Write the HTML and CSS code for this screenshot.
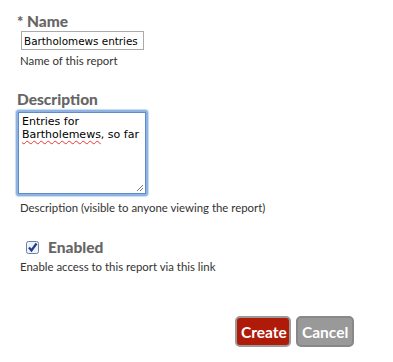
FILE: index.html
```html
<!DOCTYPE html>
<html>
<head>
<title>New report</title>
<link rel="stylesheet" href="styles.css">
</head>
<body>

<form id="report-form">
  <div class="field field-name">
    <label class="label" for="name"><span class="req">*</span> Name</label>
    <input type="text" id="name" class="text-input" value="Bartholomews entries">
    <div class="hint">Name of this report</div>
  </div>

  <div class="field field-desc">
    <label class="label" for="desc">Description</label>
    <div class="area-wrap">
      <div class="area">Entries for<br><span class="misspelt">Bartholemews</span>, so far
        <svg class="grip" width="8" height="8" viewBox="0 0 8 8"><path d="M1 7L7 1M4 7L7 4" stroke="#777" stroke-width="1"/></svg>
      </div>
    </div>
    <div class="hint">Description (visible to anyone viewing the report)</div>
  </div>

  <div class="field field-enabled">
    <label class="label check-label">
      <span class="checkbox">
        <svg width="13" height="13" viewBox="0 0 13 13"><rect x="0.5" y="0.5" width="12" height="12" rx="2" fill="#eef2fa" stroke="#6a7fa8"/><path d="M3 6.5L5.5 9.5L10.5 2.5" fill="none" stroke="#1d3f8a" stroke-width="2.2"/></svg>
      </span>
      Enabled
    </label>
    <div class="hint">Enable access to this report via this link</div>
  </div>

  <div class="actions">
    <button type="button" class="btn btn-create">Create</button>
    <button type="button" class="btn btn-cancel">Cancel</button>
  </div>
</form>

</body>
</html>
```

FILE: styles.css
```css
body { margin: 0; background: #fff; font-family: "Lato", "Open Sans", sans-serif; color: #333; }
#report-form { width: 393px; height: 362px; padding: 13px 0 0 16px; box-sizing: border-box; }
.label { display: block; font-size: 15.5px; font-weight: 900; color: #666; line-height: 17px; }
.req { font-size: 15px; }
.field-name .label { margin-left: 1px; }
.text-input { display: block; width: 123px; height: 19px; box-sizing: border-box; margin: 1px 0 0 5px; padding: 0 2px; border: 1px solid #aaa; font-family: "DejaVu Sans", sans-serif; font-size: 10.4px; color: #000; }
.hint { font-size: 11.4px; color: #333; margin: 4px 0 0 4px; line-height: 13px; }
.field-desc { margin-top: 24px; }
.field-desc .label { margin-left: 1px; }
.area-wrap { margin: 2px 0 0 0; width: 132px; height: 86px; padding: 2px; box-sizing: border-box; border-radius: 3px; background: #8fb3e0; box-shadow: 0 0 1px 1px #c7dbf3; }
.area { position: relative; width: 100%; height: 100%; box-sizing: border-box; background: #fff; border: 1px solid #5e8ccd; padding: 2px 3px; font-family: "DejaVu Sans", sans-serif; font-size: 11px; line-height: 13px; color: #000; }
.misspelt { text-decoration: underline wavy #e33; text-decoration-thickness: 1px; text-underline-offset: 2px; }
.grip { position: absolute; right: 1px; bottom: 1px; }
.field-desc .hint { margin-top: 5px; }
.field-enabled { margin-top: 25px; }
.check-label { display: flex; align-items: center; gap: 9px; margin-left: 10px; font-size: 15.5px; }
.checkbox { display: flex; width: 13px; height: 13px; }
.field-enabled .hint { margin-top: 4px; }
.actions { display: flex; gap: 5px; margin: 43px 0 0 219px; }
.btn { height: 31px; padding: 0 4px; border: 2px solid #9a9a9a; border-radius: 5px; font-family: "Lato", "Open Sans", sans-serif; font-size: 15.5px; font-weight: 700; color: #fff; cursor: pointer; }
.btn-create { width: 56px; background: #b01a08; }
.btn-cancel { width: 58px; background: #999; border-color: #888; }
```
